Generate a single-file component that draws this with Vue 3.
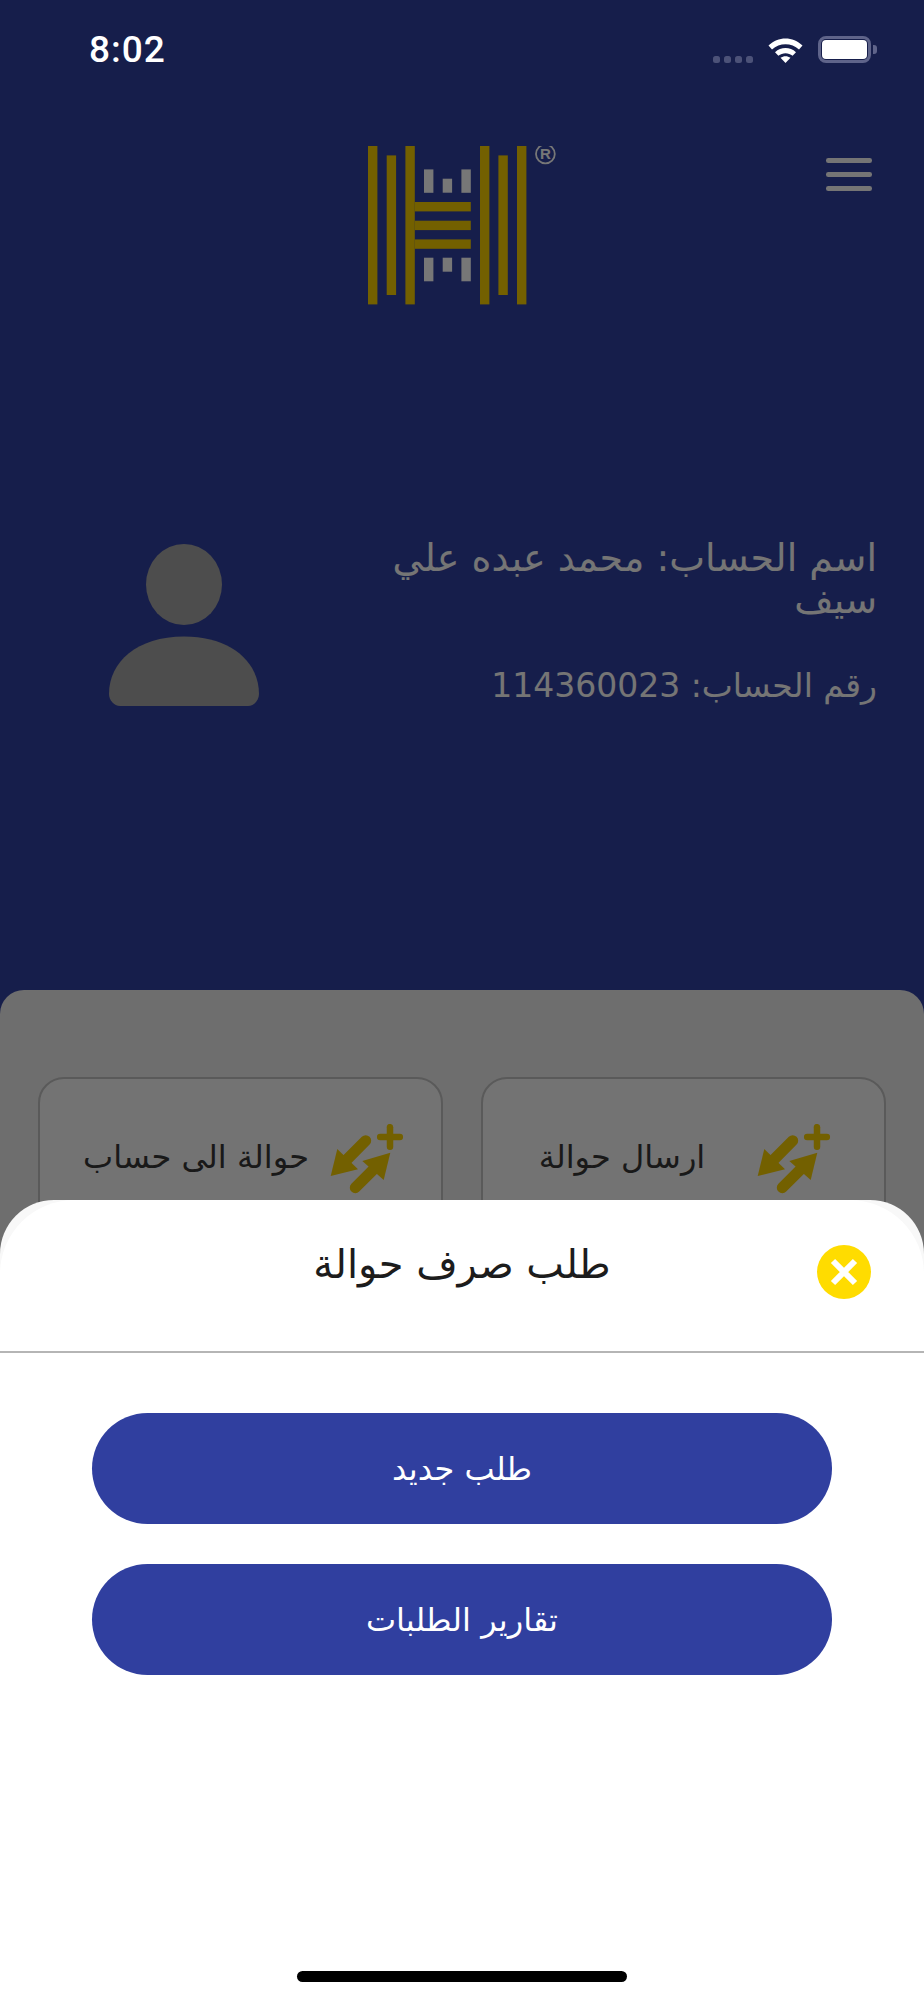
<template>
  <div class="page">
    <div class="status">
      <span class="time">8:02</span>
      <div class="status__right">
        <div class="signal"><i></i><i></i><i></i><i></i></div>
        <svg class="wifi" viewBox="0 0 35 27" width="35" height="27">
          <path d="M0.5 9.5C10 0 25 0 34.5 9.5L31 13.5C23.5 6.5 11.5 6.5 4 13.5Z" fill="#fff" />
          <path d="M7 16.2C13 10.7 22 10.7 28 16.2L24.6 19.8C20.6 16.4 14.4 16.4 10.4 19.8Z" fill="#fff" />
          <path d="M12.5 21.8C15.5 19.6 19.5 19.6 22.5 21.8L17.5 27Z" fill="#fff" />
        </svg>
        <div class="battery">
          <div class="battery__fill"></div>
        </div>
        <div class="battery__nub"></div>
      </div>
    </div>

    <header class="top">
      <svg class="logo" viewBox="0 0 190 160" width="190" height="160">
        <g fill="#e6c000">
          <rect x="0" y="0" width="9.4" height="158.4" />
          <rect x="18.7" y="9.4" width="9.4" height="139.6" />
          <rect x="37.4" y="0" width="9.4" height="158.4" />
          <rect x="112" y="0" width="9.4" height="158.4" />
          <rect x="130.4" y="9.4" width="9.4" height="139.6" />
          <rect x="149" y="0" width="9.4" height="158.4" />
          <rect x="46.8" y="56" width="56" height="9.4" />
          <rect x="46.8" y="74.7" width="56" height="9.4" />
          <rect x="46.8" y="93.4" width="56" height="9.4" />
        </g>
        <g fill="#eee">
          <rect x="56" y="23.4" width="9.4" height="23.4" />
          <rect x="74.7" y="32.7" width="9.4" height="14" />
          <rect x="93.4" y="23.4" width="9.4" height="23.4" />
          <rect x="56" y="111.7" width="9.4" height="23.6" />
          <rect x="74.7" y="111.7" width="9.4" height="14" />
          <rect x="93.4" y="111.7" width="9.4" height="23.6" />
        </g>
        <circle cx="177.4" cy="8" r="9.4" fill="none" stroke="#eee" stroke-width="1.8" />
        <text x="177.4" y="13.4" text-anchor="middle" class="logo__r">R</text>
      </svg>
      <button class="menu"><i></i><i></i><i></i></button>
    </header>

    <section class="profile">
      <svg class="avatar" viewBox="0 0 150 162" width="150" height="162">
        <ellipse cx="75" cy="40.5" rx="38" ry="40.5" fill="#9a9a9a" />
        <path d="M0 150C0 118 28 92.5 75 92.5C122 92.5 150 118 150 150C150 156 145 162 139 162H11C5 162 0 156 0 150Z" fill="#9a9a9a" />
      </svg>
      <div class="info" dir="rtl">
        <p class="info__name">اسم الحساب: محمد عبده علي سيف</p>
        <p class="info__num">رقم الحساب: 114360023</p>
      </div>
    </section>

    <section class="panel">
      <div class="card card--account">
        <span class="card__text">حوالة الى حساب</span>
        <svg class="card__icon" viewBox="0 0 74 70" width="74" height="70"><use href="#swap" /></svg>
      </div>
      <div class="card card--send">
        <span class="card__text">ارسال حوالة</span>
        <svg class="card__icon" viewBox="0 0 74 70" width="74" height="70"><use href="#swap" /></svg>
      </div>
    </section>

    <svg width="0" height="0" class="defs">
      <symbol id="swap" viewBox="0 0 74 70">
        <g fill="#e6c000">
          <path d="M7.3 25L0.7 52L28 45.3Z" />
          <path d="M32.3 37L60.3 28.7L53.7 56Z" />
        </g>
        <g stroke="#e6c000" stroke-linecap="round" fill="none">
          <path d="M35.7 16.7L14 38.5" stroke-width="11" />
          <path d="M25.3 63.7L47 42" stroke-width="11" />
          <path d="M60 3.2V22.8" stroke-width="6.5" />
          <path d="M50.2 13H69.8" stroke-width="6.5" />
        </g>
      </symbol>
    </svg>

    <div class="scrim"></div>

    <div class="sheet">
      <div class="sheet__head">
        <h2 class="sheet__title">طلب صرف حوالة</h2>
        <button class="close">
          <svg viewBox="0 0 54 54" width="54" height="54">
            <circle cx="27" cy="27" r="27" fill="#ffdc00" />
            <path d="M16 16L38 38M38 16L16 38" stroke="#fff" stroke-width="6" />
          </svg>
        </button>
      </div>
      <div class="sheet__body">
        <button class="action">طلب جديد</button>
        <button class="action">تقارير الطلبات</button>
      </div>
      <div class="home"></div>
    </div>
  </div>
</template>

<script setup>
</script>

<style>
body {
  background: #161e4a;
}
</style>

<style scoped>
.page {
  position: relative;
  width: 924px;
  height: 2000px;
  overflow: hidden;
  background: #2d3c96;
  font-family: "DejaVu Sans", sans-serif;
}
.status {
  position: relative;
  z-index: 3;
  height: 100px;
  padding: 0 47px 0 89px;
  display: flex;
  justify-content: space-between;
  align-items: flex-start;
}
.time {
  margin-top: 29px;
  font-family: Roboto, sans-serif;
  font-weight: 500;
  font-size: 37px;
  line-height: 42px;
  letter-spacing: 1px;
  color: #fff;
}
.status__right {
  margin-top: 36px;
  display: flex;
  align-items: center;
}
.signal {
  display: flex;
  gap: 3.5px;
  align-self: flex-end;
  margin-right: 15px;
}
.signal i {
  width: 7.5px;
  height: 7.5px;
  border-radius: 2.5px;
  background: #4c5278;
}
.wifi {
  margin-right: 15px;
}
.battery {
  width: 53px;
  height: 27px;
  box-sizing: border-box;
  border: 3px solid #5f648a;
  border-radius: 8px;
  padding: 1px;
}
.battery__fill {
  height: 100%;
  background: #fff;
  border-radius: 4px;
}
.battery__nub {
  width: 4px;
  height: 9px;
  margin-left: 2px;
  background: #5f648a;
  border-radius: 0 3px 3px 0;
}
.top {
  display: flex;
  justify-content: space-between;
  align-items: flex-start;
  padding: 46px 52px 0 368px;
  height: 200px;
  box-sizing: border-box;
}
.logo__r {
  font-family: "Liberation Sans", sans-serif;
  font-size: 15px;
  font-weight: 700;
  fill: #eee;
}
.menu {
  margin-top: 12px;
  padding: 0;
  border: 0;
  background: none;
  display: flex;
  flex-direction: column;
  gap: 9.5px;
}
.menu i {
  width: 46px;
  height: 4.6px;
  border-radius: 2.3px;
  background: #eaeaea;
}
.profile {
  display: flex;
  justify-content: space-between;
  align-items: flex-start;
  padding: 237px 47px 0 109px;
  height: 690px;
  box-sizing: border-box;
}
.avatar {
  margin-top: 7px;
}
.info {
  width: 500px;
  color: #eaeaea;
  font-size: 38px;
  line-height: 42px;
}
.info p {
  margin: 0;
}
.info .info__num {
  margin-top: 44px;
  font-size: 33px;
}
.panel {
  height: 1010px;
  box-sizing: border-box;
  background: #dcdcdc;
  border-radius: 24px 24px 0 0;
  padding: 87px 38px 0;
  display: grid;
  grid-template-columns: 1fr 1fr;
  column-gap: 38px;
}
.card {
  height: 240px;
  box-sizing: border-box;
  background: #e6e6e6;
  border: 2px solid #b4b4b4;
  border-radius: 26px;
  display: flex;
  align-items: flex-start;
  color: #333;
  font-size: 32px;
}
.card--send {
  padding: 45px 53px 0 4px;
}
.card--account {
  padding: 45px 37px 0 22px;
}
.card__text {
  flex: 1;
  text-align: center;
  margin-top: 14px;
  white-space: nowrap;
}
.defs {
  position: absolute;
}
.scrim {
  position: absolute;
  inset: 0;
  z-index: 2;
  background: rgba(0, 0, 0, 0.5);
}
.sheet {
  position: absolute;
  left: 0;
  right: 0;
  bottom: 0;
  height: 800px;
  z-index: 3;
  background: #f8f8f8;
  border-radius: 54px 54px 0 0;
}
.sheet::before {
  content: "";
  position: absolute;
  inset: 0;
  background: #fff;
  border-radius: 74px 74px 0 0;
}
.sheet__head {
  position: relative;
  height: 153px;
  box-sizing: border-box;
  border-bottom: 2px solid #b5b5b5;
  text-align: center;
}
.sheet__title {
  margin: 0;
  padding-top: 36px;
  font-size: 40px;
  line-height: 56px;
  font-weight: 400;
  color: #1c1c1c;
}
.close {
  position: absolute;
  top: 45px;
  right: 53px;
  padding: 0;
  border: 0;
  background: none;
  display: flex;
}
.sheet__body {
  position: relative;
  padding: 60px 92px 0;
  display: flex;
  flex-direction: column;
  gap: 40px;
}
.action {
  height: 111px;
  border: 0;
  border-radius: 56px;
  background: #303f9f;
  color: #fff;
  font-family: "DejaVu Sans", sans-serif;
  font-size: 32px;
}
.home {
  position: absolute;
  left: 297px;
  bottom: 18px;
  width: 330px;
  height: 11px;
  border-radius: 6px;
  background: #000;
}
</style>
